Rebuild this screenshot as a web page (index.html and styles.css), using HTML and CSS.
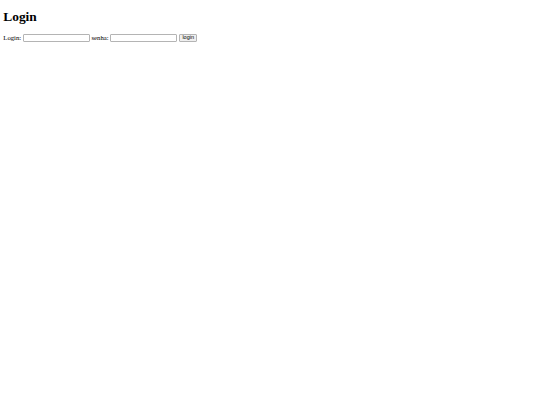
FILE: index.html
```html
<!DOCTYPE html>
<html>
<head>
<meta charset="utf-8">
<link rel="stylesheet" href="styles.css">
</head>
<body class="page">
<h1 class="title">Login</h1>
<form class="login-form">
<span class="lbl">Login:</span>
<input class="field" type="text">
<span class="lbl">senha:</span>
<input class="field" type="password">
<button class="btn" type="button">login</button>
</form>
</body>
</html>
```
FILE: styles.css
```css
html, body { background: #fff; }
.page {
  margin: 3.3px;
  font-family: "Liberation Serif", serif;
  font-size: 6.7px;
  color: #000;
}
.title {
  font-family: "Liberation Serif", serif;
  font-size: 13.4px;
  font-weight: bold;
  line-height: 15px;
  margin: 5.5px 0 9.8px 0;
  color: #000;
}
.login-form {
  display: flex;
  align-items: center;
  gap: 1.7px;
  margin: 0;
}
.lbl {
  color: #000;
  font-family: "Liberation Serif", serif;
  font-size: 6.7px;
}
.field {
  width: 67px;
  height: 8.5px;
  box-sizing: border-box;
  border: 1px solid #b4b4b4;
  border-radius: 1px;
  padding: 0;
  margin: 0;
  background: #fff;
}
.btn {
  height: 8.5px;
  box-sizing: border-box;
  font-family: "Liberation Sans", Arial, sans-serif;
  font-size: 5.5px;
  line-height: 5px;
  padding: 0 2.4px;
  margin: 0;
  border: 1px solid #b4b4b4;
  border-radius: 1px;
  background: #efefef;
  color: #000;
}
```
